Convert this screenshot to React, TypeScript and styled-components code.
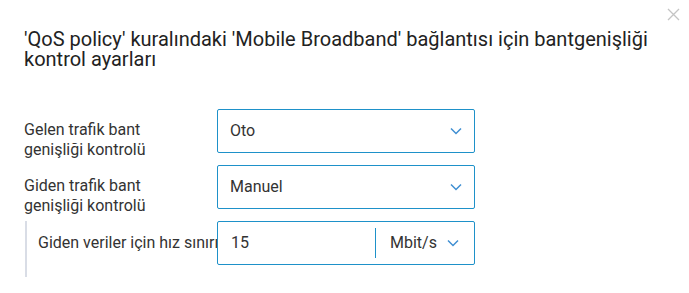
import React from 'react'
import styled, { createGlobalStyle } from 'styled-components'

const GlobalStyle = createGlobalStyle`
  html, body {
    margin: 0;
    padding: 0;
    background: #ffffff;
    font-family: Roboto, 'Liberation Sans', sans-serif;
    color: #333333;
  }
`

const Dialog = styled.div`
  position: relative;
  width: 689px;
  height: 293px;
  box-sizing: border-box;
  padding: 29px 24px 0;
  overflow: hidden;
`

const CloseButton = styled.button`
  position: absolute;
  top: 7px;
  right: 9px;
  width: 14px;
  height: 14px;
  padding: 0;
  border: none;
  background: none;
  cursor: pointer;
  display: flex;
  align-items: center;
  justify-content: center;
`

const Title = styled.h2`
  margin: 0;
  font-size: 20px;
  font-weight: 400;
  line-height: 20px;
  color: #222222;
`

const Form = styled.div`
  margin-top: 40px;
  display: flex;
  flex-direction: column;
  gap: 12px;
`

const Row = styled.div<{ $center?: boolean }>`
  display: grid;
  grid-template-columns: ${p => (p.$center ? '179px' : '193px')} 258px;
  grid-template-rows: 44px;
  align-items: ${p => (p.$center ? 'center' : 'start')};
`

const Label = styled.div<{ $nowrap?: boolean }>`
  font-size: 16px;
  line-height: 20px;
  padding-top: ${p => (p.$nowrap ? '0' : '11px')};
  padding-right: ${p => (p.$nowrap ? '0' : '30px')};
  white-space: ${p => (p.$nowrap ? 'nowrap' : 'normal')};
  overflow: ${p => (p.$nowrap ? 'hidden' : 'visible')};
  color: #333333;
`

const Box = styled.div`
  box-sizing: border-box;
  height: 44px;
  border: 1px solid #1e91c9;
  border-radius: 2px;
  display: flex;
  align-items: center;
  background: #ffffff;
`

const SelectBox = styled(Box)`
  padding: 0 12px 0 12px;
  justify-content: space-between;
  font-size: 16px;
  line-height: 20px;
`

const SubSection = styled.div`
  margin-left: 1px;
  border-left: 2px solid #d9dde6;
  padding: 0 0 12px 11px;
`

const ValueInput = styled.div`
  flex: 1;
  padding-left: 13px;
  font-size: 16px;
  line-height: 20px;
`

const Divider = styled.div`
  width: 1px;
  align-self: stretch;
  margin: 6px 0;
  background: #1e91c9;
`

const UnitSelect = styled.div`
  width: 98px;
  box-sizing: border-box;
  padding: 0 0 0 14px;
  display: flex;
  align-items: center;
  gap: 10px;
  font-size: 16px;
  line-height: 20px;
`

function Chevron() {
  return (
    <svg width="12" height="8" viewBox="0 0 12 8" fill="none">
      <path d="M1 1.5 L6 6.5 L11 1.5" stroke="#3f8fd2" strokeWidth="1.5" />
    </svg>
  )
}

function Select({ value }: { value: string }) {
  return (
    <SelectBox>
      <span>{value}</span>
      <Chevron />
    </SelectBox>
  )
}

export default function App() {
  return (
    <>
      <GlobalStyle />
      <Dialog>
        <CloseButton aria-label="Kapat">
          <svg width="13" height="13" viewBox="0 0 13 13">
            <path d="M1 1 L12 12 M12 1 L1 12" stroke="#c4c4c4" strokeWidth="1.3" />
          </svg>
        </CloseButton>
        <Title>
          {"'QoS policy' kuralındaki 'Mobile Broadband' bağlantısı için bantgenişliği kontrol ayarları"}
        </Title>
        <Form>
          <Row>
            <Label>{'Gelen trafik bant genişliği kontrolü'}</Label>
            <Select value={'Oto'} />
          </Row>
          <Row>
            <Label>{'Giden trafik bant genişliği kontrolü'}</Label>
            <Select value={'Manuel'} />
          </Row>
          <SubSection>
            <Row $center>
              <Label $nowrap>{'Giden veriler için hız sınırı'}</Label>
              <Box>
                <ValueInput>{'15'}</ValueInput>
                <Divider />
                <UnitSelect>
                  <span>{'Mbit/s'}</span>
                  <Chevron />
                </UnitSelect>
              </Box>
            </Row>
          </SubSection>
        </Form>
      </Dialog>
    </>
  )
}
